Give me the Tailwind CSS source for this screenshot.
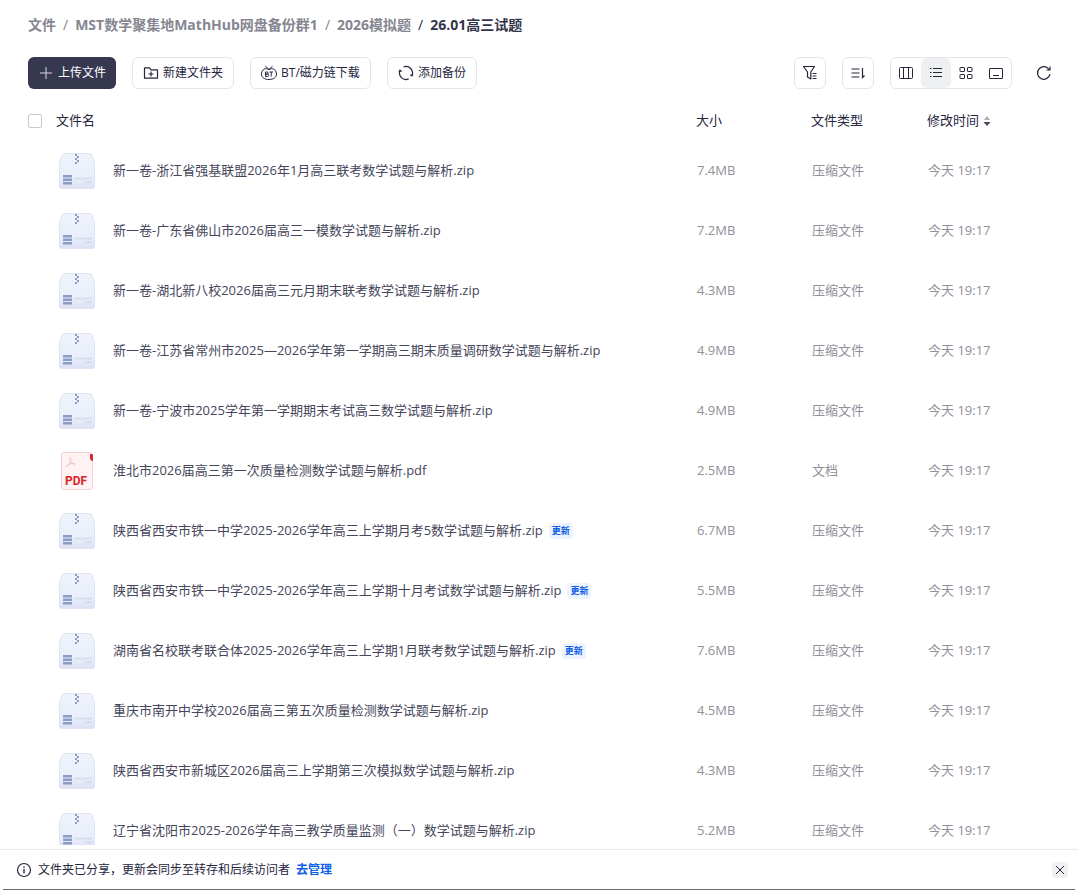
<!DOCTYPE html>
<html lang="zh-CN">
<head>
  <meta charset="UTF-8" />
  <meta name="viewport" content="width=device-width, initial-scale=1.0" />
  <title>26.01高三试题</title>
  <script src="https://cdn.jsdelivr.net/npm/@tailwindcss/browser@4"></script>
</head>
<body class="h-screen flex flex-col overflow-hidden bg-white text-[#25263d] text-[13px] font-['Open_Sans','Noto_Sans_CJK_SC',sans-serif]">

  <!-- Shared gradient for the archive icons -->
  <svg class="absolute w-0 h-0" aria-hidden="true">
    <defs>
      <linearGradient id="zipFill" x1="0" y1="0" x2="0" y2="1">
        <stop offset="0" stop-color="#eff3fc" />
        <stop offset="0.7" stop-color="#e9eefa" />
        <stop offset="1" stop-color="#dddff4" />
      </linearGradient>
    </defs>
  </svg>

  <!-- Breadcrumb -->
  <nav class="flex items-center px-7 pt-3 h-[38px] shrink-0 gap-[7px] text-sm font-bold text-[#858690] whitespace-nowrap">
    <a href="#">文件</a>
    <span class="font-normal">/</span>
    <a href="#">MST数学聚集地MathHub网盘备份群1</a>
    <span class="font-normal">/</span>
    <a href="#">2026模拟题</a>
    <span class="font-normal text-[#25263d]">/</span>
    <a href="#" class="text-[#33344a]">26.01高三试题</a>
  </nav>

  <!-- Toolbar -->
  <div class="flex items-center justify-between pl-7 pr-6 mt-[19px] shrink-0 text-xs">
    <div class="flex gap-4">
      <button class="flex items-center justify-center gap-1 w-[88px] h-8 rounded-md bg-[#363850] text-white">
        <svg class="w-4 h-4" viewBox="0 0 16 16" fill="none" stroke="#d5d6dd"><path d="M8 2v12M2 8h12" /></svg>
        上传文件
      </button>
      <button class="flex items-center justify-center gap-1 w-[102px] h-8 rounded-md border border-[#e4e5ea]">
        <svg class="w-4 h-4" viewBox="0 0 16 16" fill="none" stroke="currentColor" stroke-width="1.200"><path d="M1.500 13.200V2.800h5l1.500 2h6.500v8.400zM8 6.500v5M5.500 9h5" stroke-linejoin="round" /></svg>
        新建文件夹
      </button>
      <button class="flex items-center justify-center gap-1 w-[121px] h-8 rounded-md border border-[#e4e5ea]">
        <svg class="w-4 h-4" viewBox="0 0 16 16" fill="none" stroke="currentColor"><path d="M5.500 3.500C2.500 3.700.5 6 .5 9c0 3.500 3 5.500 7.500 5.500s7.500-2 7.500-5.500c0-3-2-5.300-5-5.500M8 4.500 4.500 1.200M8 4.500l3.500-3.300M5.500 3.700 8 4.500l2.500-.8" /><path d="M4.500 7v4.500M4.500 7h1.700q1 0 1 1.100t-1 1.100H4.500h2q1.100 0 1.100 1.100t-1.100 1.200h-2M8.500 7h3.500M10.200 7v4.500" /></svg>
        BT/磁力链下载
      </button>
      <button class="flex items-center justify-center gap-1 w-[90px] h-8 rounded-md border border-[#e4e5ea]">
        <svg class="w-4 h-4" viewBox="0 0 16 16" fill="none" stroke="currentColor" stroke-width="1.200"><path d="M5.500 2A6.500 6.500 0 0 1 13.900 10.700M2 5.500A6.500 6.500 0 0 0 10.700 13.900M1 7l1-1.800L3.600 6.500M15 9l-1 1.900-1.700-1.200" /></svg>
        添加备份
      </button>
    </div>
    <div class="flex items-center gap-4">
      <button aria-label="筛选" class="flex items-center justify-center w-8 h-8 rounded-md border border-[#e4e5ea]">
        <svg class="w-4 h-4" viewBox="0 0 16 16" fill="none" stroke="currentColor" stroke-width="1.200"><path d="M1.500 1.500h11L8.800 7v7L5.500 12V7zM10.500 8.500h4M10.500 11h4M10.500 13.500h4" stroke-linejoin="round" /></svg>
      </button>
      <button aria-label="排序" class="flex items-center justify-center w-8 h-8 rounded-md border border-[#e4e5ea]">
        <svg class="w-4 h-4" viewBox="0 0 16 16" fill="none" stroke="currentColor"><path d="M1.500 4h8M1.500 8h8M1.500 12h8M12.500 3v9.500l2-2" stroke-width="1.200" /></svg>
      </button>
      <div class="flex h-8 rounded-md border border-[#e4e5ea] overflow-hidden">
        <button aria-label="分栏" class="flex items-center justify-center w-[30px]">
          <svg class="w-4 h-4" viewBox="0 0 16 16" fill="none" stroke="currentColor"><rect x="1.500" y="2.500" width="13" height="11" rx="1" /><path d="M5.500 2.500v11M10.500 2.500v11" /></svg>
        </button>
        <button aria-label="列表" class="flex items-center justify-center w-[30px] rounded-md bg-[#eff0f2]">
          <svg class="w-4 h-4" viewBox="0 0 16 16" fill="none" stroke="currentColor"><path d="M2 3.500h1.500M2 7.500h1.500M2 11.500h1.500M5 3.500h9M5 7.500h9M5 11.500h9" /></svg>
        </button>
        <button aria-label="网格" class="flex items-center justify-center w-[30px]">
          <svg class="w-4 h-4" viewBox="0 0 16 16" fill="none" stroke="currentColor"><rect x="2" y="2.500" width="4.500" height="4" rx=".5" /><rect x="9.500" y="2.500" width="4.500" height="4" rx=".5" /><rect x="2" y="9.500" width="4.500" height="4" rx=".5" /><rect x="9.500" y="9.500" width="4.500" height="4" rx=".5" /></svg>
        </button>
        <button aria-label="大图" class="flex items-center justify-center w-[30px]">
          <svg class="w-4 h-4" viewBox="0 0 16 16" fill="none" stroke="currentColor"><rect x="1.500" y="3.500" width="13" height="10" rx=".5" /><path d="M5 10.500h6" /></svg>
        </button>
      </div>
      <button aria-label="刷新" class="flex items-center justify-center w-5 h-8 ml-[6px]">
        <svg class="w-4 h-4" viewBox="0 0 16 16" fill="none" stroke="currentColor"><path d="M14 9.200A6.300 6.300 0 1 1 13.400 5M14 1.500V5h-3.500" stroke-width="1.200" /></svg>
      </button>
    </div>
  </div>

  <!-- File list -->
  <main class="flex-1 min-h-0 overflow-hidden mt-3">
    <table class="w-full table-fixed text-left">
      <colgroup>
        <col class="w-14" />
        <col />
        <col class="w-[115px]" />
        <col class="w-[116px]" />
        <col class="w-[151px]" />
      </colgroup>
      <thead>
        <tr class="h-10">
          <th class="pl-7"><input type="checkbox" aria-label="全选" class="block appearance-none w-[14px] h-[14px] rounded-xs border border-[#c9cad0] bg-white" /></th>
          <th class="font-normal">文件名</th>
          <th class="font-normal">大小</th>
          <th class="font-normal">文件类型</th>
          <th class="font-normal">
            <button class="flex items-center gap-1">修改时间
              <svg class="w-2 h-3" viewBox="0 0 8 12"><path d="M4 1l3 4H1z" fill="#a9aab0" /><path d="M4 11L.5 7h7z" fill="#4a4b58" /></svg>
            </button>
          </th>
        </tr>
      </thead>
      <tbody id="fileRows"></tbody>
    </table>
  </main>

  <!-- Share notice -->
  <footer class="shrink-0 mt-1 border-t border-[#e9e9ec] text-xs">
    <div class="flex items-center h-10 pl-4 pr-[10px]">
      <svg class="w-4 h-4 mr-[6px]" viewBox="0 0 16 16" fill="none" stroke="currentColor"><circle cx="8" cy="8" r="6.500" stroke-width="1.200" /><path d="M8 7v4.500M8 4.500V6" stroke-width="1.300" /></svg>
      <span>文件夹已分享，更新会同步至转存和后续访问者</span>
      <a href="#" class="ml-[6px] font-bold text-[#0d5fe8]">去管理</a>
      <button aria-label="关闭" class="ml-auto flex items-center justify-center w-4 h-4 rounded-sm bg-[#eff0f2]">
        <svg class="w-[10px] h-[10px]" viewBox="0 0 10 10" fill="none" stroke="currentColor"><path d="M1 1l8 8M9 1L1 9" /></svg>
      </button>
    </div>
    <div class="h-px -mt-px mx-[3px] bg-[#6b6b6e]"></div>
  </footer>

  <script>
    const zipIcon = `
      <svg class="w-9 h-[38px] mr-[18px] shrink-0" viewBox="0 0 36 36">
        <path d="M5.500.5h25c1 0 1.600.5 2 1.400L35 8c.3.700.5 1.300.5 2v23.500a2 2 0 0 1-2 2h-31a2 2 0 0 1-2-2V10c0-.7.200-1.300.5-2l2.500-6.100c.4-.9 1-1.400 2-1.400z" fill="url(#zipFill)" stroke="#dfe4f2" />
        <path d="M16 1h2v2h-2zM18 3h2v2h-2zM16 5h2v2h-2zM18 7h2v2h-2zM16 9h2v2h-2z" fill="#8d99bd" />
        <path d="M4 22h9v2.500H4zM4 25.500h9V28H4zM4 29h9v2.500H4z" fill="#8b9cc5" />
        <path d="M16 25.500h17M26 29h7" stroke="#d5dbeb" stroke-width="2" stroke-dasharray="2.500 .5" />
      </svg>`;

    const pdfIcon = `
      <svg class="w-9 h-[38px] mr-[18px] shrink-0" viewBox="0 0 36 38">
        <rect x="2.500" y=".5" width="31" height="37" rx="2.500" fill="#fef2f2" stroke="#f8d2d2" />
        <path d="M31 2h1.500c.8 0 1.500.7 1.500 1.500V9h-1l-2-2z" fill="#d8262c" />
        <path d="M11 5.500c1.500 0 .8 3-.4 5.500-1 2-2.300 3.600-3.100 3.500-.9-.4 1.700-2.200 4.500-2.800 2.300-.5 4.500-.3 4.400.4-.2.900-2.800-.2-4.300-2-1.300-1.700-2-4.600-1.100-4.600z" fill="none" stroke="#efc8c8" />
        <text x="17" y="33" text-anchor="middle" class="font-[Roboto,sans-serif] font-bold text-xs" fill="#d8262c">PDF</text>
      </svg>`;

    const files = [
      { name: "新一卷-浙江省强基联盟2026年1月高三联考数学试题与解析.zip", size: "7.4MB" },
      { name: "新一卷-广东省佛山市2026届高三一模数学试题与解析.zip", size: "7.2MB" },
      { name: "新一卷-湖北新八校2026届高三元月期末联考数学试题与解析.zip", size: "4.3MB" },
      { name: "新一卷-江苏省常州市2025—2026学年第一学期高三期末质量调研数学试题与解析.zip", size: "4.9MB" },
      { name: "新一卷-宁波市2025学年第一学期期末考试高三数学试题与解析.zip", size: "4.9MB" },
      { name: "淮北市2026届高三第一次质量检测数学试题与解析.pdf", size: "2.5MB", pdf: true },
      { name: "陕西省西安市铁一中学2025-2026学年高三上学期月考5数学试题与解析.zip", size: "6.7MB", updated: true },
      { name: "陕西省西安市铁一中学2025-2026学年高三上学期十月考试数学试题与解析.zip", size: "5.5MB", updated: true },
      { name: "湖南省名校联考联合体2025-2026学年高三上学期1月联考数学试题与解析.zip", size: "7.6MB", updated: true },
      { name: "重庆市南开中学校2026届高三第五次质量检测数学试题与解析.zip", size: "4.5MB" },
      { name: "陕西省西安市新城区2026届高三上学期第三次模拟数学试题与解析.zip", size: "4.3MB" },
      { name: "辽宁省沈阳市2025-2026学年高三教学质量监测（一）数学试题与解析.zip", size: "5.2MB" }
    ];

    document.getElementById("fileRows").innerHTML = files.map(file => `
      <tr class="h-[60px] text-[#8f9099]">
        <td colspan="2" class="pl-[59px]">
          <div class="flex items-center whitespace-nowrap text-[#45465a]">
            ${file.pdf ? pdfIcon : zipIcon}
            <span>${file.name}</span>
            ${file.updated ? '<span class="ml-[6px] px-[3px] h-4 leading-4 rounded-sm bg-[#edf3fe] text-[9px] font-bold text-[#0d5fe8]">更新</span>' : ""}
          </div>
        </td>
        <td class="pl-px">${file.size}</td>
        <td class="pl-px">${file.pdf ? "文档" : "压缩文件"}</td>
        <td class="pl-px">今天 19:17</td>
      </tr>`).join("");
  </script>

</body>
</html>
